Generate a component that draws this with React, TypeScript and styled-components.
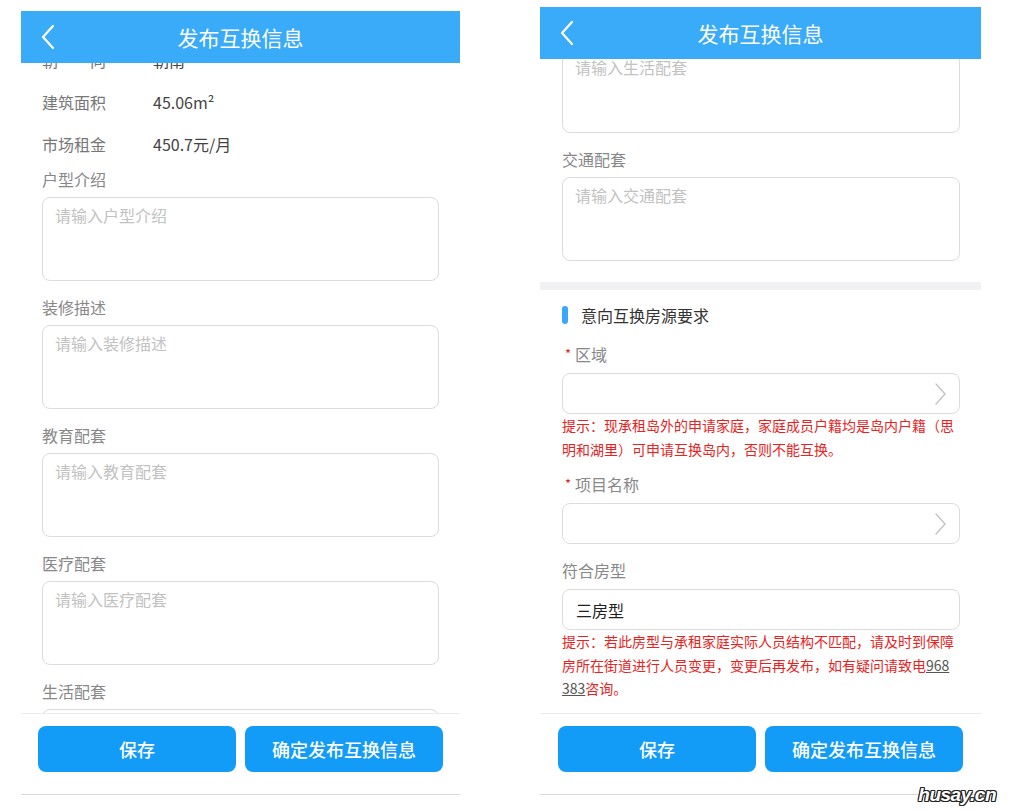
import styled, { createGlobalStyle } from 'styled-components'

const GlobalStyle = createGlobalStyle`
  body {
    margin: 0;
    background: #fff;
    font-family: "Noto Sans CJK SC", "Noto Sans", sans-serif;
  }
`

const Page = styled.div`
  position: relative;
  width: 1009px;
  height: 810px;
  box-sizing: border-box;
  padding-left: 21px;
  display: flex;
  align-items: flex-start;
  gap: 80px;
  overflow: hidden;
`

const Phone = styled.div<{ $top: number; $width: number }>`
  margin-top: ${p => p.$top}px;
  width: ${p => p.$width}px;
  height: ${p => 795 - p.$top}px;
  display: flex;
  flex-direction: column;
  background: #fff;
`

const Header = styled.div`
  flex-shrink: 0;
  height: 52px;
  background: #3aabf9;
  display: grid;
  grid-template-columns: 60px 1fr 60px;
  align-items: center;
`

const BackButton = styled.div`
  padding-left: 19px;
  display: flex;
  align-items: center;
`

const Title = styled.h1`
  margin: 0;
  text-align: center;
  color: #fff;
  font-size: 21px;
  font-weight: 400;
  line-height: 52px;
`

const Body = styled.div`
  flex: 1;
  min-height: 0;
  overflow: hidden;
`

// scrolled position of the form
const Scroller = styled.div<{ $offset: number }>`
  margin-top: ${p => -p.$offset}px;
`

const Section = styled.div<{ $left?: number }>`
  padding: 0 21px 0 ${p => p.$left ?? 22}px;
`

const InfoRow = styled.div`
  height: 42px;
  display: flex;
  align-items: center;
  font-size: 16px;
`

const InfoLabel = styled.span`
  width: 111px;
  color: #777;
`

const InfoValue = styled.span`
  color: #444;
`

const Field = styled.div<{ $gap?: number; $top?: number }>`
  padding-top: ${p => p.$top ?? 0}px;
  padding-bottom: ${p => p.$gap ?? 15}px;
`

const Label = styled.div`
  font-size: 16px;
  line-height: 22px;
  color: #888;
`

const Star = styled.span`
  color: #e8231e;
  font-size: 13px;
  margin: 0 4px 0 3px;
  vertical-align: top;
`

const TextArea = styled.textarea`
  display: block;
  width: 100%;
  height: 84px;
  margin-top: 7px;
  box-sizing: border-box;
  border: 1px solid #dcdcdc;
  border-radius: 8px;
  padding: 6px 12px;
  resize: none;
  font-family: inherit;
  font-size: 16px;
  line-height: 22px;
  color: #333;
  outline: none;

  &::placeholder {
    color: #c2c2c2;
  }
`

const SelectBox = styled.div`
  margin-top: 8px;
  height: 41px;
  box-sizing: border-box;
  border: 1px solid #dcdcdc;
  border-radius: 8px;
  padding: 0 13px 0 13px;
  display: flex;
  align-items: center;
  justify-content: space-between;
  font-size: 16px;
  color: #222;
`

const Hint = styled.p`
  margin: 0;
  font-size: 14px;
  line-height: 23.5px;
  color: #e8231e;
`

const Phone968 = styled.span`
  color: #555;
  text-decoration: underline;
`

const Divider = styled.div`
  margin-top: 6px;
  height: 8px;
  background: #f1f1f4;
`

const SectionTitle = styled.div`
  padding-top: 14px;
  margin-bottom: 17px;
  display: flex;
  align-items: center;
  gap: 13px;
  font-size: 16px;
  line-height: 22px;
  color: #333;

  &::before {
    content: '';
    width: 6px;
    height: 18px;
    border-radius: 3px;
    background: #3aa8f8;
  }
`

const Footer = styled.div<{ $pad: number }>`
  flex-shrink: 0;
  display: flex;
  gap: 9px;
  padding: 12px ${p => p.$pad}px 22px;
  border-top: 1px solid #ebebeb;
  border-bottom: 1px solid #d8d8d8;
`

const ActionButton = styled.button`
  flex: 1;
  height: 46px;
  border: none;
  border-radius: 8px;
  background: #139cf7;
  color: #fff;
  font-family: inherit;
  font-size: 18px;
  font-weight: 500;
  cursor: pointer;
`

const Watermark = styled.div`
  position: absolute;
  right: 13px;
  bottom: 4px;
  font-family: "Liberation Sans", Arial, sans-serif;
  font-size: 19px;
  font-weight: 700;
  font-style: italic;
  letter-spacing: -0.5px;
  color: #fff;
  text-shadow:
    1px 0 0 #222, -1px 0 0 #222, 0 1px 0 #222, 0 -1px 0 #222,
    1px 1px 0 #222, -1px -1px 0 #222, 1px -1px 0 #222, -1px 1px 0 #222;
`

const BackIcon = () => (
  <svg width="16" height="26" viewBox="0 0 16 26">
    <polyline points="13,2 3,13 13,24" fill="none" stroke="#fff" strokeWidth="2.2" strokeLinecap="round" strokeLinejoin="round" />
  </svg>
)

const ChevronIcon = () => (
  <svg width="12" height="22" viewBox="0 0 12 22">
    <polyline points="2,1 11,11 2,21" fill="none" stroke="#c4c4c4" strokeWidth="1.4" strokeLinecap="round" strokeLinejoin="round" />
  </svg>
)

const NavBar = () => (
  <Header>
    <BackButton>
      <BackIcon />
    </BackButton>
    <Title>发布互换信息</Title>
    <span />
  </Header>
)

const Actions = ({ pad }: { pad: number }) => (
  <Footer $pad={pad}>
    <ActionButton>保存</ActionButton>
    <ActionButton>确定发布互换信息</ActionButton>
  </Footer>
)

const TextField = ({ name, top }: { name: string; top?: number }) => (
  <Field $top={top}>
    <Label>{name}</Label>
    <TextArea placeholder={`请输入${name}`} />
  </Field>
)

const houseInfo = [
  { label: '朝　　向', value: '朝南' },
  { label: '建筑面积', value: '45.06m²' },
  { label: '市场租金', value: '450.7元/月' },
]

const HouseForm = () => (
  <Phone $top={11} $width={439}>
    <NavBar />
    <Body>
      <Scroller $offset={24}>
        <Section $left={21}>
          {houseInfo.map(row => (
            <InfoRow key={row.label}>
              <InfoLabel>{row.label}</InfoLabel>
              <InfoValue>{row.value}</InfoValue>
            </InfoRow>
          ))}
          <TextField name="户型介绍" top={3} />
          <TextField name="装修描述" />
          <TextField name="教育配套" />
          <TextField name="医疗配套" />
          <TextField name="生活配套" />
        </Section>
      </Scroller>
    </Body>
    <Actions pad={17} />
  </Phone>
)

const WishForm = () => (
  <Phone $top={7} $width={441}>
    <NavBar />
    <Body>
      <Scroller $offset={39}>
        <Section>
          <TextField name="生活配套" />
          <TextField name="交通配套" />
        </Section>
        <Divider />
        <Section>
          <SectionTitle>意向互换房源要求</SectionTitle>
          <Field $gap={12}>
            <Label>
              <Star>*</Star>区域
            </Label>
            <SelectBox>
              <span />
              <ChevronIcon />
            </SelectBox>
            <Hint>
              提示：现承租岛外的申请家庭，家庭成员户籍均是岛内户籍（思
              <br />
              明和湖里）可申请互换岛内，否则不能互换。
            </Hint>
          </Field>
          <Field>
            <Label>
              <Star>*</Star>项目名称
            </Label>
            <SelectBox>
              <span />
              <ChevronIcon />
            </SelectBox>
          </Field>
          <Field>
            <Label>符合房型</Label>
            <SelectBox>三房型</SelectBox>
            <Hint>
              提示：若此房型与承租家庭实际人员结构不匹配，请及时到保障
              <br />
              房所在街道进行人员变更，变更后再发布，如有疑问请致电<Phone968>968</Phone968>
              <br />
              <Phone968>383</Phone968>咨询。
            </Hint>
          </Field>
        </Section>
      </Scroller>
    </Body>
    <Actions pad={18} />
  </Phone>
)

export default function App() {
  return (
    <>
      <GlobalStyle />
      <Page>
        <HouseForm />
        <WishForm />
        <Watermark>husay.cn</Watermark>
      </Page>
    </>
  )
}
